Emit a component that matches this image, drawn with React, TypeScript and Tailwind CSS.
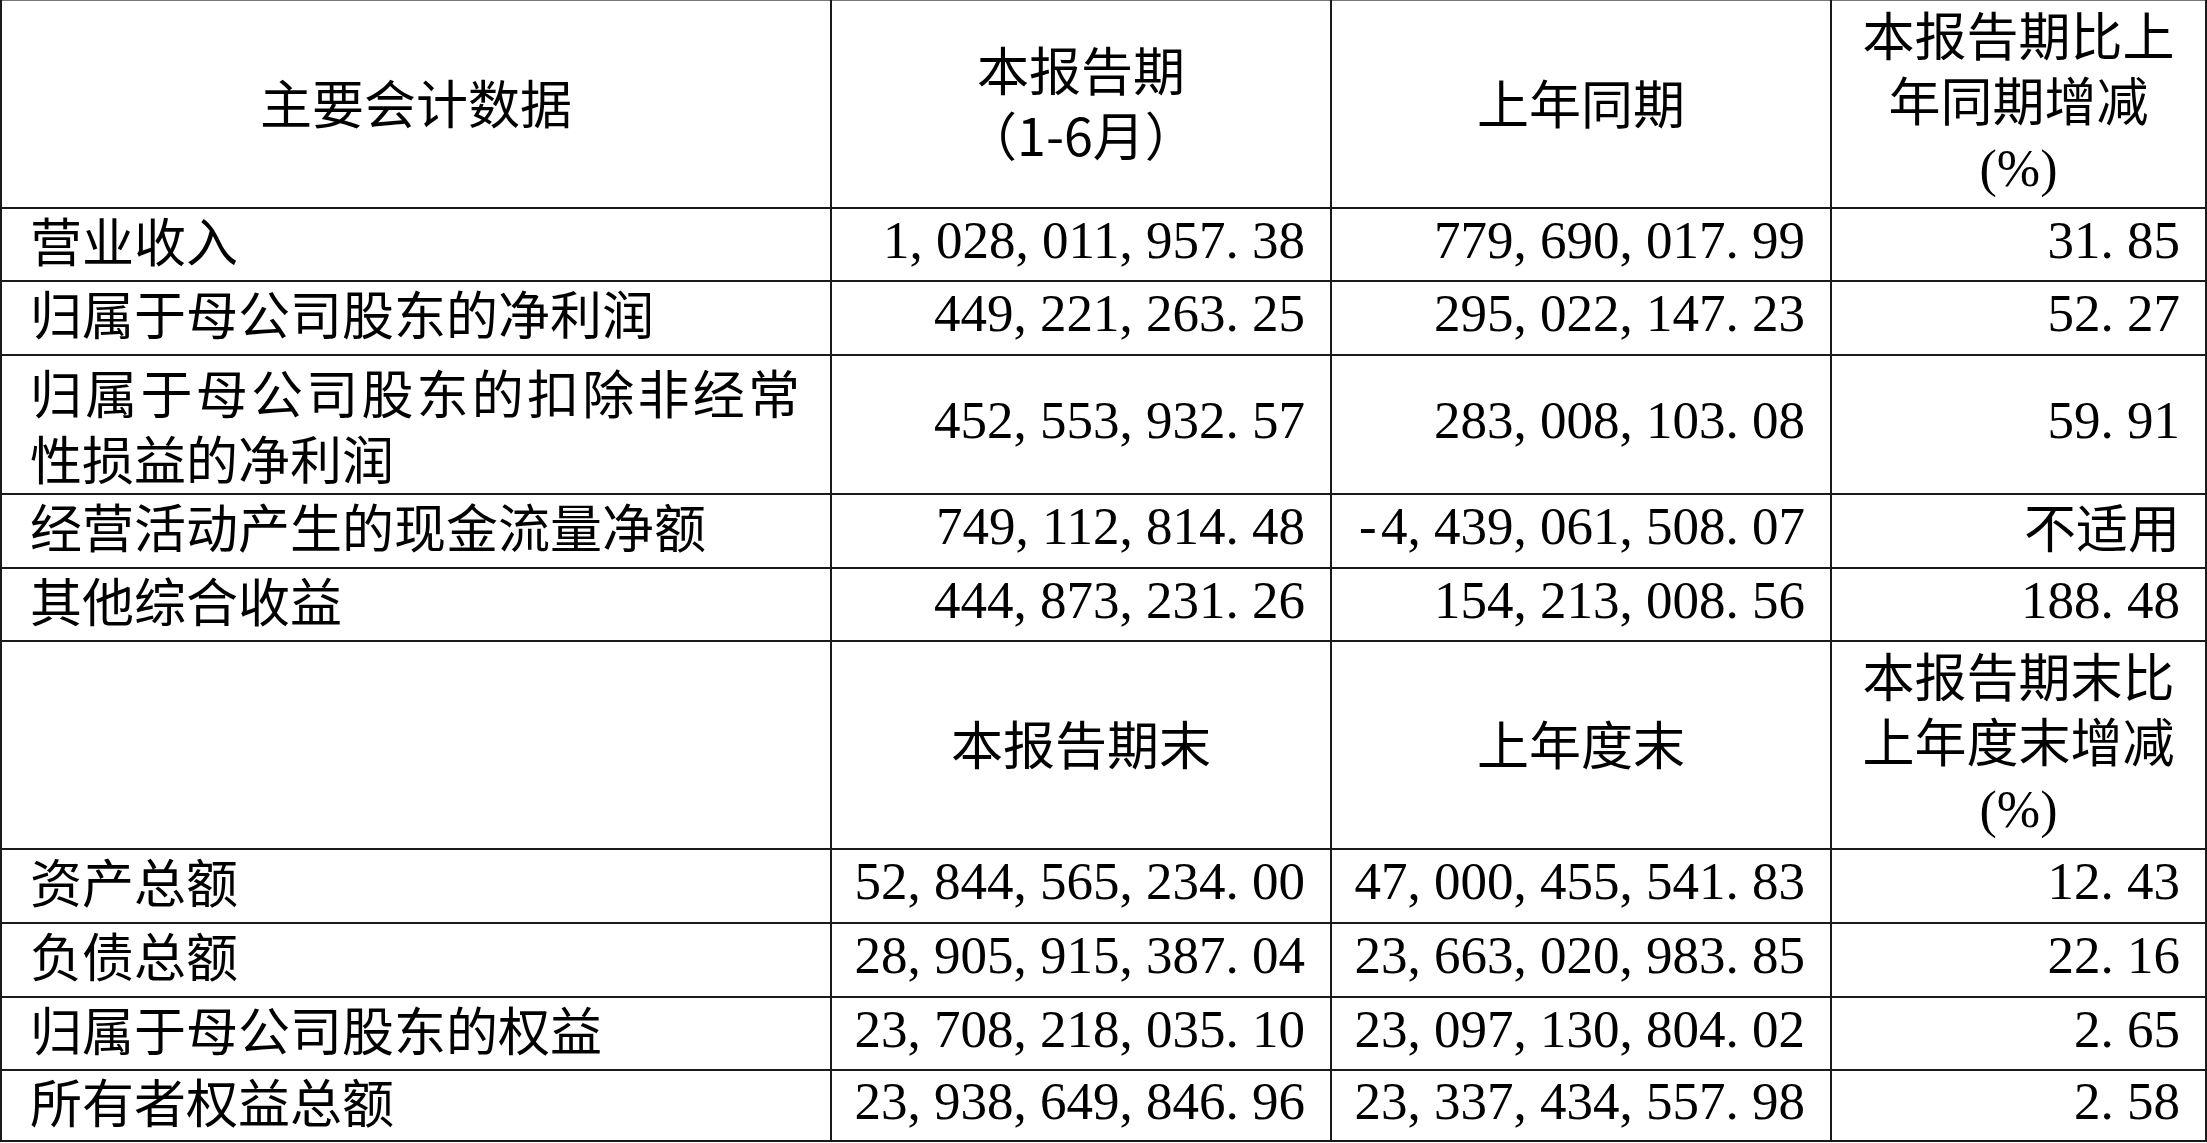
import React from "react";

type Row = {
  label: string;
  cur: string;
  prev: string;
  pct: string;
  h: string;
};

const cjk = "font-['Noto_Sans_CJK_SC',sans-serif]";
const serif = "font-['Liberation_Serif','Noto_Sans_CJK_SC',serif]";

const incomeRows: Row[] = [
  { label: "营业收入", cur: "1,028,011,957.38", prev: "779,690,017.99", pct: "31.85", h: "h-[73px]" },
  { label: "归属于母公司股东的净利润", cur: "449,221,263.25", prev: "295,022,147.23", pct: "52.27", h: "h-[74px]" },
  {
    label: "归属于母公司股东的扣除非经常性损益的净利润",
    cur: "452,553,932.57",
    prev: "283,008,103.08",
    pct: "59.91",
    h: "h-[139px]",
  },
  { label: "经营活动产生的现金流量净额", cur: "749,112,814.48", prev: "-4,439,061,508.07", pct: "不适用", h: "h-[74px]" },
  { label: "其他综合收益", cur: "444,873,231.26", prev: "154,213,008.56", pct: "188.48", h: "h-[73px]" },
];

const balanceRows: Row[] = [
  { label: "资产总额", cur: "52,844,565,234.00", prev: "47,000,455,541.83", pct: "12.43", h: "h-[74px]" },
  { label: "负债总额", cur: "28,905,915,387.04", prev: "23,663,020,983.85", pct: "22.16", h: "h-[74px]" },
  { label: "归属于母公司股东的权益", cur: "23,708,218,035.10", prev: "23,097,130,804.02", pct: "2.65", h: "h-[73px]" },
  { label: "所有者权益总额", cur: "23,938,649,846.96", prev: "23,337,434,557.98", pct: "2.58", h: "h-[71px]" },
];

const isNum = (v: string) => /^[-0-9,.]+$/.test(v);

// digits are half-width in the source font, separators take a half cell too
function Num({ v }: { v: string }) {
  if (!isNum(v)) return <>{v}</>;
  return (
    <>
      {v.split("").map((ch, i) =>
        /[0-9]/.test(ch) ? (
          <React.Fragment key={i}>{ch}</React.Fragment>
        ) : (
          <span key={i} className={ch === "-" ? "inline-block w-[0.5em] text-center" : "inline-block w-[0.5em] text-left"}>
            {ch}
          </span>
        ),
      )}
    </>
  );
}

const cell = "border-2 border-[#1a1a1a] p-0 align-middle";
const pctMark = <span className={serif}>(%)</span>;

function HeaderRow({ cols, first }: { cols: React.ReactNode[]; first?: boolean }) {
  return (
    <tr className="h-[207px]">
      {cols.map((c, i) => (
        <th
          key={i}
          className={`${cell} pb-[6px] text-center font-normal text-[52px] leading-[65px] ${
            first ? "border-t border-t-[#777]" : ""
          }`}
        >
          {c}
        </th>
      ))}
    </tr>
  );
}

function NumCell({ v }: { v: string }) {
  const font = isNum(v) ? `${serif} text-[53px]` : `${cjk} text-[52px]`;
  return (
    <td className={`${cell} ${font} leading-[54px] pr-[25px] pb-[10px] text-right whitespace-nowrap`}>
      <Num v={v} />
    </td>
  );
}

function DataRow({ r }: { r: Row }) {
  const long = r.label.length > 14;
  return (
    <tr className={r.h}>
      <td
        className={`${cell} pl-[28px] pr-[30px] text-[52px] ${
          long ? "text-justify leading-[66px]" : "text-left leading-[54px] pb-[10px]"
        }`}
      >
        {r.label}
      </td>
      <NumCell v={r.cur} />
      <NumCell v={r.prev} />
      <NumCell v={r.pct} />
    </tr>
  );
}

export default function App() {
  return (
    <div className={`min-h-screen bg-white text-black ${cjk}`}>
      <table className="w-[2205px] table-fixed border-collapse">
        <colgroup>
          <col className="w-[830px]" />
          <col className="w-[500px]" />
          <col className="w-[500px]" />
          <col className="w-[375px]" />
        </colgroup>
        <tbody>
          <HeaderRow
            first
            cols={[
              "主要会计数据",
              <>
                本报告期
                <br />
                （1-6月）
              </>,
              "上年同期",
              <>
                本报告期比上
                <br />
                年同期增减
                <br />
                {pctMark}
              </>,
            ]}
          />
          {incomeRows.map((r) => (
            <DataRow key={r.label} r={r} />
          ))}
          <HeaderRow
            cols={[
              "",
              "本报告期末",
              "上年度末",
              <>
                本报告期末比
                <br />
                上年度末增减
                <br />
                {pctMark}
              </>,
            ]}
          />
          {balanceRows.map((r) => (
            <DataRow key={r.label} r={r} />
          ))}
        </tbody>
      </table>
    </div>
  );
}
